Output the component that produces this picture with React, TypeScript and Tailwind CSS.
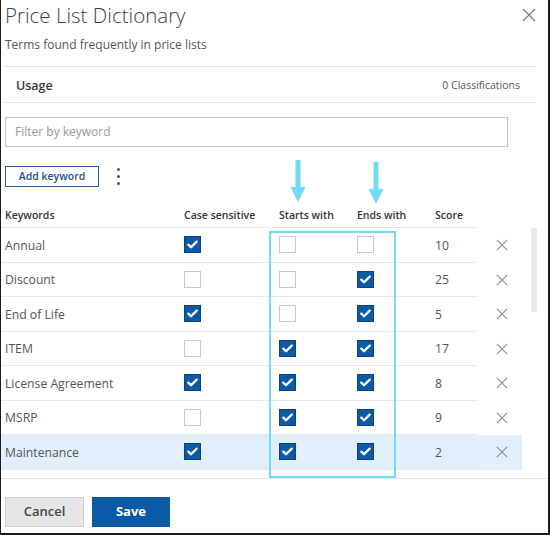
import React from 'react';

type Row = { name: string; cs: boolean; sw: boolean; ew: boolean; score: number | null };

const rows: Row[] = [
  { name: 'Annual', cs: true, sw: false, ew: false, score: 10 },
  { name: 'Discount', cs: false, sw: false, ew: true, score: 25 },
  { name: 'End of Life', cs: true, sw: false, ew: true, score: 5 },
  { name: 'ITEM', cs: false, sw: true, ew: true, score: 17 },
  { name: 'License Agreement', cs: true, sw: true, ew: true, score: 8 },
  { name: 'MSRP', cs: false, sw: true, ew: true, score: 9 },
  { name: 'Maintenance', cs: true, sw: true, ew: true, score: 2 },
  { name: '', cs: false, sw: false, ew: false, score: null },
];

const Check = ({ on }: { on: boolean }) =>
  on ? (
    <div className="w-[17px] h-[17px] bg-[#0b5aa8] border border-[#123f74] flex items-center justify-center">
      <svg width="11" height="9" viewBox="0 0 11 9">
        <path d="M1.3 4.6l2.7 2.6L9.7 1.6" fill="none" stroke="#fff" strokeWidth="2.3" strokeLinecap="round" strokeLinejoin="round" />
      </svg>
    </div>
  ) : (
    <div className="w-[17px] h-[17px] bg-white border border-[#c9c9c9]" />
  );

const Cross = ({ size, color }: { size: number; color: string }) => (
  <svg width={size} height={size} viewBox="0 0 14 14">
    <path d="M1 1l12 12M13 1L1 13" stroke={color} strokeWidth="1.2" fill="none" />
  </svg>
);

const Arrow = ({ left, top }: { left: string; top: string }) => (
  <svg className={`absolute ${left} ${top}`} width="16" height="43" viewBox="0 0 16 43">
    <path d="M8 1v27" stroke="#6fdbf6" strokeWidth="5" strokeLinecap="round" />
    <path d="M0.5 27h15L8 42z" fill="#6fdbf6" />
  </svg>
);

export default function App() {
  return (
    <div className="relative w-[550px] h-[535px] bg-white border-l border-r-2 border-b-2 border-[#1c1c1c] flex flex-col overflow-hidden font-['Open_Sans',sans-serif]">
      {/* Header */}
      <div className="ml-[4px] w-[531px]">
        <div className="h-[30px] flex items-center justify-between">
          <h1 className="text-[20.5px] leading-[30px] font-light text-[#3a3f47]">Price List Dictionary</h1>
          <Cross size={14} color="#7a7a7a" />
        </div>
        <p className="h-[30px] leading-[30px] text-[12px] text-[#555]">Terms found frequently in price lists</p>
        <div className="h-[7px] border-b border-[#e2e2e2]" />
        <div className="h-[36px] flex items-center justify-between pt-[3px] pl-[11px] pr-[16px] border-b border-[#e2e2e2]">
          <span className="text-[12.5px] font-semibold text-[#3a3a3a]">Usage</span>
          <span className="text-[10.5px] text-[#555]">0 Classifications</span>
        </div>
      </div>

      <div className="ml-[4px] mt-[14px] w-[503px] h-[30px] border border-[#c4c4c4] flex items-center px-[9px]">
        <span className="text-[12px] text-[#9a9a9a]">Filter by keyword</span>
      </div>

      <div className="ml-[4px] mt-[19px] h-[21px] flex items-center">
        <button className="w-[94px] h-[21px] border border-[#2562a8] text-[10.5px] font-semibold text-[#234f86] flex items-center justify-center">
          Add keyword
        </button>
        <div className="ml-[18px] flex flex-col gap-[4px]">
          <span className="w-[3px] h-[3px] rounded-full bg-[#555]" />
          <span className="w-[3px] h-[3px] rounded-full bg-[#555]" />
          <span className="w-[3px] h-[3px] rounded-full bg-[#555]" />
        </div>
      </div>

      {/* Table header */}
      <div className="mt-[18px] w-[477px] h-[23px] pt-[3px] flex border-b border-[#e6e6e6] text-[10.5px] font-semibold text-[#333]">
        <div className="w-[179px] pl-[4px]">Keywords</div>
        <div className="w-[95px] pl-[4px]">Case sensitive</div>
        <div className="w-[78px] pl-[4px]">Starts with</div>
        <div className="w-[78px] pl-[4px]">Ends with</div>
        <div className="w-[47px] pl-[4px]">Score</div>
      </div>

      {/* Rows */}
      <div className="h-[251px] flex overflow-hidden border-b border-[#e6e6e6]">
        <div className="w-[521px]">
          {rows.map((r, i) => (
            <div key={i} className={`h-[34.5px] flex ${i === 6 ? 'bg-[#e1effc]' : ''}`}>
              <div className="w-[477px] flex items-center border-b border-[#e8e8e8] text-[12.2px] text-[#555]">
                <div className="w-[179px] pl-[4px] pt-[2px]">{r.name}</div>
                <div className="w-[95px] pl-[4px]"><Check on={r.cs} /></div>
                <div className="w-[78px] pl-[4px]"><Check on={r.sw} /></div>
                <div className="w-[78px] pl-[4px]"><Check on={r.ew} /></div>
                <div className="w-[47px] pl-[4px] pt-[2px]">{r.score}</div>
              </div>
              <div className="w-[44px] flex items-center pl-[18px]">
                {r.score !== null && <Cross size={12} color="#8a8a8a" />}
              </div>
            </div>
          ))}
        </div>
        <div className="ml-[9px] w-[6px] h-[84px] bg-[#e9e9ed]" />
      </div>

      {/* Footer */}
      <div className="pt-[18px] pl-[4px] flex gap-[8px]">
        <button className="w-[79px] h-[30px] bg-[#e6e6e6] border border-[#d2d2d2] text-[13px] font-semibold text-[#444]">Cancel</button>
        <button className="w-[78px] h-[30px] bg-[#0b5aa8] text-[13px] font-bold text-white">Save</button>
      </div>

      {/* Annotations */}
      <div className="absolute left-[268px] top-[231px] w-[127px] h-[247px] border-2 border-[#72dbf6]" />
      <Arrow left="left-[289px]" top="top-[160px]" />
      <Arrow left="left-[367px]" top="top-[162px]" />
    </div>
  );
}
